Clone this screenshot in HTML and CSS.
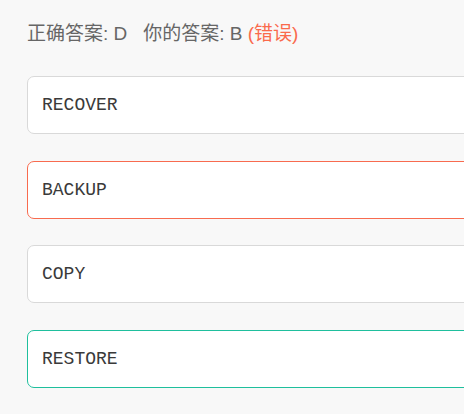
FILE: index.html
```html
<!DOCTYPE html>
<html>
<head>
<meta charset="utf-8">
<link rel="stylesheet" href="styles.css">
</head>
<body>
<div class="page">
  <div class="result">
    <span class="label">正确答案: D</span>
    <span class="label mine">你的答案: B <span class="wrong">(错误)</span></span>
  </div>
  <div class="options">
    <div class="option">RECOVER</div>
    <div class="option option-wrong">BACKUP</div>
    <div class="option">COPY</div>
    <div class="option option-right">RESTORE</div>
  </div>
</div>
</body>
</html>
```

FILE: styles.css
```css
html, body {
  margin: 0;
  padding: 0;
  background: #f8f8f8;
  overflow: hidden;
}
.page {
  padding: 22px 0 0 27px;
  width: 480px;
}
.result {
  height: 24px;
  line-height: 24px;
  font-family: "Liberation Sans", "Noto Sans CJK SC", sans-serif;
  font-size: 19px;
  color: #666;
  display: flex;
  gap: 16px;
  white-space: nowrap;
}
.wrong {
  color: #fa6a4c;
}
.options {
  margin-top: 30px;
  display: flex;
  flex-direction: column;
  gap: 26.67px;
}
.option {
  box-sizing: border-box;
  height: 58px;
  background: #fff;
  border: 1px solid #d9d9d9;
  border-radius: 7px;
  padding-left: 14px;
  display: flex;
  align-items: center;
  font-family: "Courier New", "Nimbus Mono PS", "Liberation Mono", monospace;
  font-size: 18px;
  color: #3a3a3a;
}
.option-wrong {
  border-color: #f86b4f;
}
.option-right {
  border-color: #1fbf9d;
}
```
